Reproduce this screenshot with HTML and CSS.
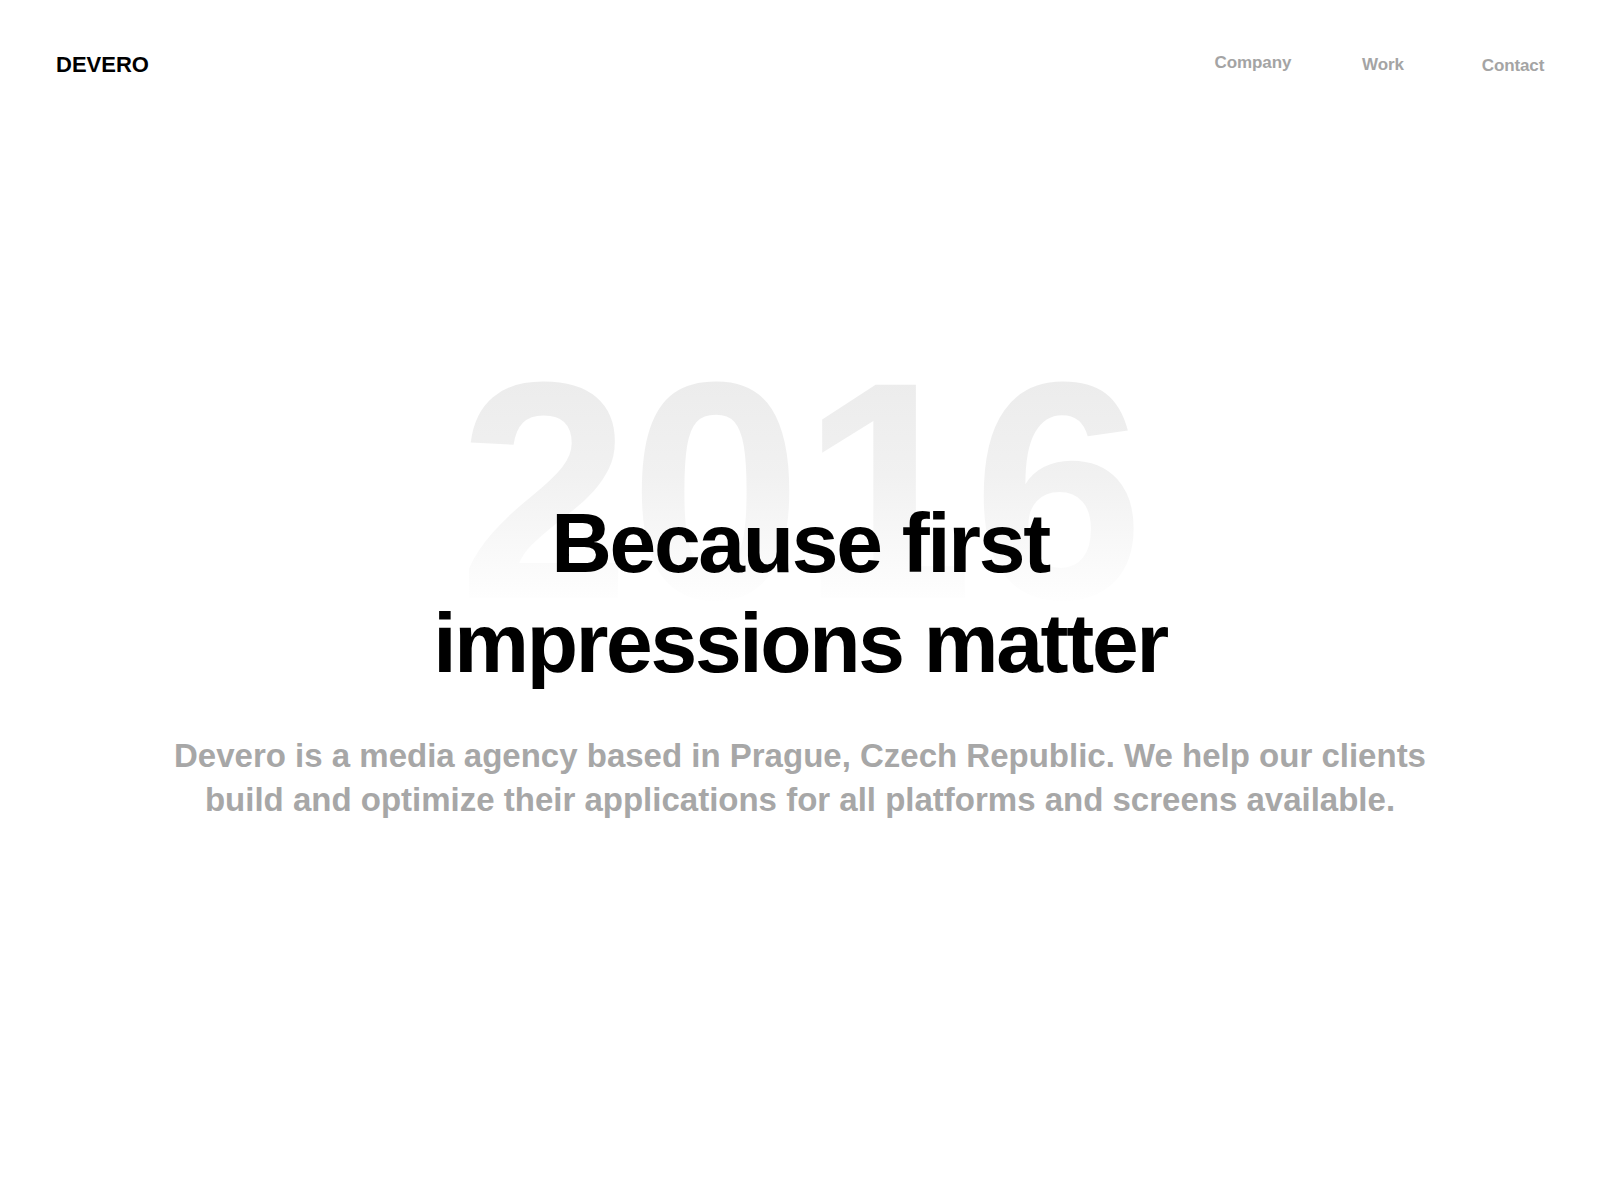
FILE: index.html
```html
<!DOCTYPE html>
<html lang="en">
<head>
<meta charset="utf-8">
<title>Devero</title>
<link rel="stylesheet" href="styles.css">
</head>
<body>
<header class="site-header">
  <a class="logo" href="#">DEVERO</a>
  <nav class="nav">
    <a class="nav-link nav-company" href="#">Company</a>
    <a class="nav-link nav-work" href="#">Work</a>
    <a class="nav-link nav-contact" href="#">Contact</a>
  </nav>
</header>
<main class="hero">
  <div class="hero-year" aria-hidden="true">2016</div>
  <h1 class="hero-title">Because first impressions matter</h1>
  <p class="hero-text">Devero is a media agency based in Prague, Czech Republic. We help our clients build and optimize their applications for all platforms and screens available.</p>
</main>
</body>
</html>
```
FILE: styles.css
```css
* { box-sizing: border-box; }
html, body { margin: 0; padding: 0; background: #ffffff; }
body {
  font-family: "Liberation Sans", Arial, Helvetica, sans-serif;
  font-weight: 700;
  color: #000;
  min-height: 1200px;
}
a { text-decoration: none; }

.site-header {
  display: flex;
  justify-content: space-between;
  align-items: flex-start;
  padding: 52px 22px 0 56px;
}
.logo {
  font-size: 22px;
  line-height: 26px;
  letter-spacing: 0;
  color: #000;
}
.nav { display: flex; }
.nav-link {
  width: 130px;
  text-align: center;
  font-size: 17px;
  line-height: 20px;
  letter-spacing: -0.1px;
  color: #a4a4a4;
}
.nav-company { margin-top: 1px; }
.nav-work { margin-top: 3px; }
.nav-contact { margin-top: 4px; }

.hero {
  position: relative;
  display: flex;
  flex-direction: column;
  align-items: center;
  padding-top: 415px;
}
.hero-year {
  position: absolute;
  top: 258px;
  left: 0;
  right: 0;
  text-align: center;
  font-size: 310px;
  line-height: 310px;
  letter-spacing: -1px;
  padding-left: 2px;
  color: #eeeeee;
  background: linear-gradient(to bottom, #ececec 14%, #f1f1f1 45%, #ffffff 88%);
  -webkit-background-clip: text;
  background-clip: text;
  -webkit-text-fill-color: transparent;
  width: max-content;
  margin: 0 auto;
  z-index: 0;
}
.hero-title {
  position: relative;
  z-index: 1;
  margin: 0;
  max-width: 780px;
  text-align: center;
  font-size: 84px;
  line-height: 100px;
  letter-spacing: -2.3px;
  font-weight: 700;
}
.hero-text {
  position: relative;
  z-index: 1;
  margin: 41px 0 0;
  width: 1290px;
  text-align: center;
  font-size: 33px;
  line-height: 44px;
  letter-spacing: 0;
  color: #a7a7a7;
}
```
